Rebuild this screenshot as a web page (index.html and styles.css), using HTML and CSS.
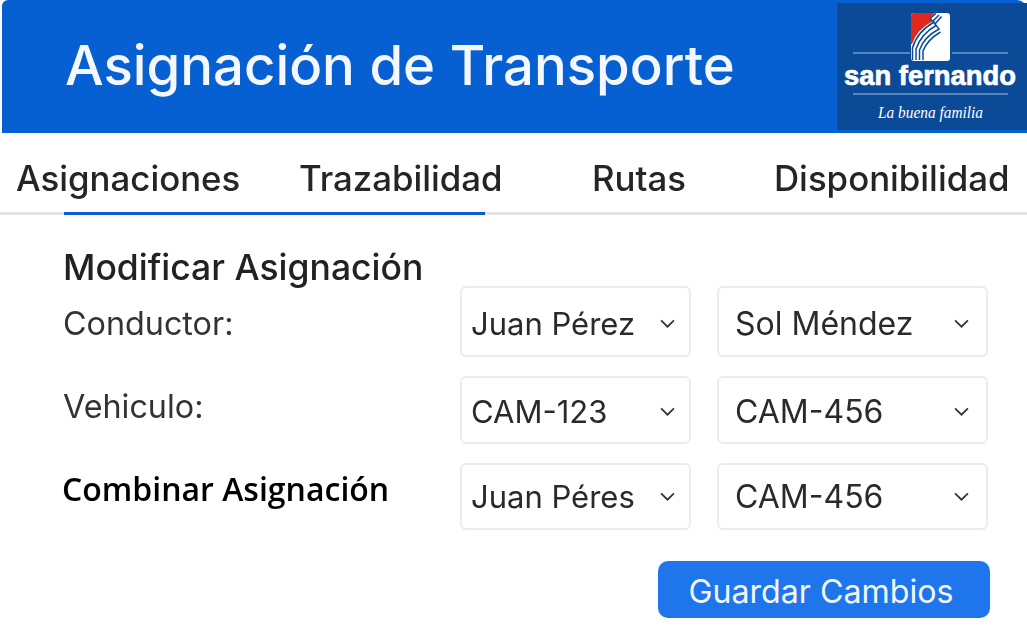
FILE: index.html
```html
<!DOCTYPE html>
<html lang="en">
<head>
  <meta charset="UTF-8">
  <meta name="viewport" content="width=device-width, initial-scale=1.0">
  <link rel="stylesheet" href="styles.css">
  <title>Asignación de Transporte</title>
</head>
<body>
  <header class="header">
    <h1 class="title">Asignación de Transporte</h1>
    <svg class="logo" viewBox="0 0 190 127" width="190" height="127">
      <rect width="190" height="127" fill="#0b4a97"/>
      <rect x="74" y="10" width="39" height="48" rx="3" fill="#fff"/>
      <path d="M74 13 Q74 10 77 10 H98 L93 15 L96 18 Q80 26 75 41 H74 Z" fill="#e0281c"/>
      <path d="M75.5 57 V45 Q80 29 97 19 L93 15.5 L99 10.5 M79 57 V46 Q84 31 99 22.5 L96 18 L102 12 M82.5 57 V47 Q87 34 102 26 L98 21 L104.5 13.5 M86 57 V48 Q90 37 103.5 29" fill="none" stroke="#0b4a97" stroke-width="1.5"/>
      <path d="M16 50 H73 M115 50 H171 M16 91 H171" stroke="#a9bfe0" stroke-width="1.2"/>
      <text class="logo-name" x="7" y="82" textLength="172" lengthAdjust="spacingAndGlyphs">san fernando</text>
      <text class="logo-tag" x="41" y="115" textLength="105" lengthAdjust="spacingAndGlyphs">La buena familia</text>
    </svg>
  </header>

  <nav class="tabs">
    <a class="tab">Asignaciones</a>
    <a class="tab">Trazabilidad</a>
    <a class="tab">Rutas</a>
    <a class="tab">Disponibilidad</a>
  </nav>
  <div class="tab-rule"><div class="tab-active"></div></div>

  <main class="content">
    <h2 class="form-title">Modificar Asignación</h2>
    <div class="form-row first">
      <div class="label">Conductor:</div>
      <div class="select"><span>Juan Pérez</span><svg class="chevron" viewBox="0 0 14 8"><path d="M1 1l6 6 6-6"/></svg></div>
      <div class="select"><span>Sol Méndez</span><svg class="chevron" viewBox="0 0 14 8"><path d="M1 1l6 6 6-6"/></svg></div>
    </div>
    <div class="form-row second">
      <div class="label">Vehiculo:</div>
      <div class="select"><span>CAM-123</span><svg class="chevron" viewBox="0 0 14 8"><path d="M1 1l6 6 6-6"/></svg></div>
      <div class="select"><span>CAM-456</span><svg class="chevron" viewBox="0 0 14 8"><path d="M1 1l6 6 6-6"/></svg></div>
    </div>
    <div class="form-row third">
      <div class="label bold">Combinar Asignación</div>
      <div class="select"><span>Juan Péres</span><svg class="chevron" viewBox="0 0 14 8"><path d="M1 1l6 6 6-6"/></svg></div>
      <div class="select"><span>CAM-456</span><svg class="chevron" viewBox="0 0 14 8"><path d="M1 1l6 6 6-6"/></svg></div>
    </div>
    <div class="actions">
      <button class="save">Guardar Cambios</button>
    </div>
  </main>
</body>
</html>
```

FILE: styles.css
```css
* {
  box-sizing: border-box;
}

html, body {
  height: 100%;
}

body {
  margin: 0;
  background-color: #fff;
  color: #1f1f1f;
  font-family: Inter, "Liberation Sans", sans-serif;
  overflow: hidden;
  filter: blur(0.4px);
}

.header {
  display: flex;
  align-items: center;
  justify-content: space-between;
  height: 133px;
  margin-left: 2px;
  padding-left: 63px;
  background-color: #0760d2;
  border-top-left-radius: 6px;
  border-top-right-radius: 10px;
}

.title {
  margin: 0 0 3px;
  color: #f4f8fe;
  font-size: 54.5px;
  font-weight: 500;
  white-space: nowrap;
}

.logo {
  flex: none;
  display: block;
}

.logo-name {
  fill: #fff;
  stroke: #fff;
  stroke-width: 0.7;
  font-family: "Liberation Sans", sans-serif;
  font-size: 27px;
  font-weight: 700;
}

.logo-tag {
  fill: #fff;
  font-family: "Liberation Serif", serif;
  font-size: 17px;
  font-style: italic;
}

.tabs {
  display: grid;
  grid-template-columns: 283px 293px 182px auto;
  align-items: center;
  height: 79px;
  padding-left: 16px;
  padding-top: 11px;
  font-size: 34.8px;
  font-weight: 500;
}

.tab {
  white-space: nowrap;
  color: #252525;
}

.tab-rule {
  height: 3px;
  background-color: #e4e4e6;
}

.tab-active {
  width: 421px;
  height: 3px;
  margin-left: 64px;
  background-color: #0a5bd6;
}

.content {
  padding: 0 39px 0 62px;
}

.form-title {
  margin: 34px 0 0;
  height: 37px;
  padding-left: 1px;
  font-size: 35.5px;
  font-weight: 500;
  line-height: 37px;
  color: #222;
  white-space: nowrap;
}

.form-row {
  display: grid;
  grid-template-columns: 372px 231px 271px;
  column-gap: 26px;
}

.form-row.first {
  height: 71px;
}

.form-row.second {
  height: 68px;
  margin-top: 19px;
}

.form-row.third {
  height: 67px;
  margin-top: 19px;
}

.label {
  padding-top: 18px;
  padding-left: 1px;
  font-size: 32.3px;
  line-height: 39px;
  color: #333;
}

.second .label {
  padding-top: 11px;
}

.label.bold {
  padding-left: 0;
  padding-top: 6px;
  font-family: "Open Sans", sans-serif;
  font-size: 32px;
  font-weight: 600;
  color: #000;
  white-space: nowrap;
}

.select {
  display: flex;
  align-items: center;
  justify-content: space-between;
  padding: 0 17px 0 16px;
  border: 2px solid #ececee;
  border-radius: 6px;
  font-size: 32px;
  color: #2a2a2a;
  white-space: nowrap;
}

.select:nth-child(2) {
  padding: 0 14px 0 9px;
  font-size: 31px;
}

.first .select,
.second .select {
  padding-top: 3px;
}

.third .select {
  padding-bottom: 1px;
}

.chevron {
  flex: none;
  width: 15px;
  height: 9px;
  fill: none;
  stroke: #333;
  stroke-width: 1.6;
}

.actions {
  display: flex;
  justify-content: flex-end;
  margin-top: 31px;
  margin-right: -2px;
}

.save {
  width: 332px;
  height: 57px;
  padding: 3px 6px 0 0;
  border: none;
  border-radius: 10px;
  background-color: #1f75ec;
  color: #f2f7ff;
  font-family: inherit;
  font-size: 32.2px;
  font-weight: 400;
}
```
